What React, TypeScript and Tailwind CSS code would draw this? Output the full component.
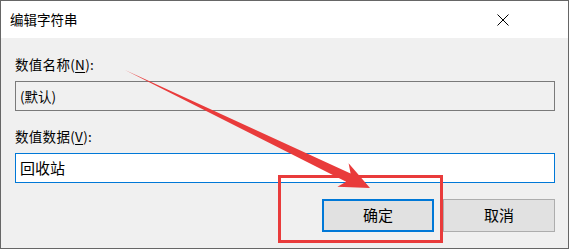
import React from 'react';

const cjk = "font-['Noto_Sans_CJK_SC','Noto_Sans',sans-serif]";

const CloseIcon = () => (
  <svg width="12" height="12" viewBox="0 0 12 12" className="block">
    <path d="M0.5 0.5 L11.5 11.5 M11.5 0.5 L0.5 11.5" stroke="#000" strokeWidth="1" fill="none" />
  </svg>
);

// red annotation drawn over the dialog (arrow + box around the OK button)
const Annotation = () => (
  <svg width="569" height="249" className="absolute left-0 top-0 pointer-events-none">
    <rect x="278.5" y="175.5" width="162" height="65" fill="none" stroke="#e93b3b" strokeWidth="3" />
    <polygon
      points="124,69 349.6,172.5 347.6,162.3 369,187 336.4,185.7 345.2,180.7"
      fill="#e93b3b"
    />
  </svg>
);

const App: React.FC = () => {
  return (
    <div className={`relative w-[569px] h-[249px] border border-[#666666] bg-[#f0f0f0] flex flex-col ${cjk}`}>
      {/* Title bar */}
      <div className="h-[37px] bg-white flex items-center justify-between pl-[9px] pr-[59px] shrink-0">
        <span className="text-[13.5px] text-black leading-none">编辑字符串</span>
        <CloseIcon />
      </div>

      {/* Body */}
      <div className="flex-1 flex flex-col pl-[14px] pr-[13px]">
        <label className="mt-[17px] h-[18px] text-[13.5px] tracking-[0.3px] leading-[18px] text-black">
          数值名称(<span className="underline underline-offset-2">N</span>):
        </label>
        <div className="mt-[8px] h-[30px] border border-[#7a7a7a] flex items-center pl-[4px] text-[13.5px] text-black">
          (默认)
        </div>

        <label className="mt-[16px] h-[18px] text-[13.5px] tracking-[0.3px] leading-[18px] text-black">
          数值数据(<span className="underline underline-offset-2">V</span>):
        </label>
        <div className="mt-[8px] h-[30px] border border-[#0078d7] bg-white flex items-center pl-[4px] text-[15px] text-black">
          回收站
        </div>

        <div className="mt-[16px] flex justify-end gap-[9px]">
          <button className="w-[112px] h-[33px] border-2 border-[#0078d7] bg-[#e1e1e1] text-[15px] text-black">
            确定
          </button>
          <button className="w-[112px] h-[33px] border border-[#adadad] bg-[#e1e1e1] text-[15px] text-black">
            取消
          </button>
        </div>
      </div>

      <Annotation />
    </div>
  );
};

export default App;
